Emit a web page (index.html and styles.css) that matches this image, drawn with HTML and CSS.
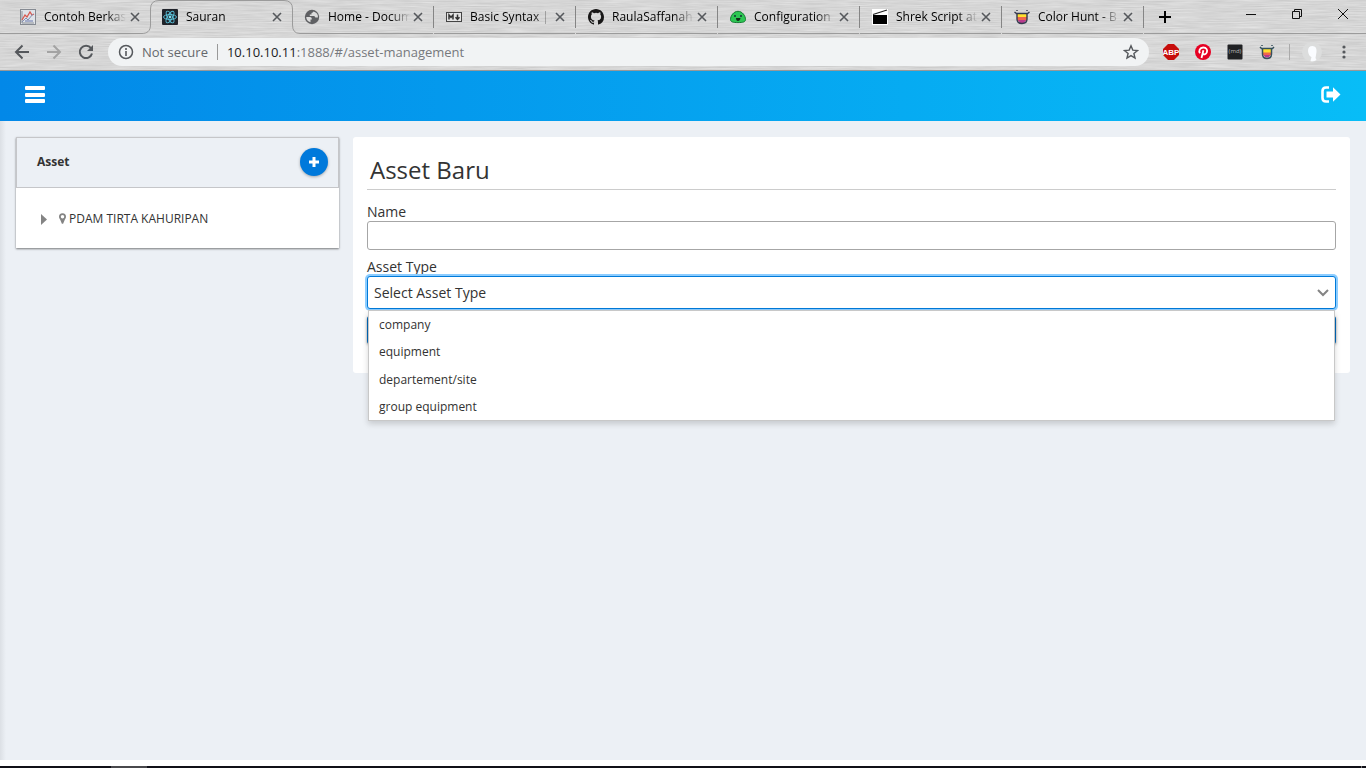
FILE: index.html
```html
<!DOCTYPE html>
<html lang="id">
<head>
<meta charset="utf-8">
<title>Sauran</title>
<link rel="stylesheet" href="styles.css">
</head>
<body>
<div class="browser">
  <svg class="metal" aria-hidden="true" preserveAspectRatio="none">
    <filter id="brushed" x="0" y="0" width="100%" height="100%" color-interpolation-filters="sRGB">
      <feTurbulence type="fractalNoise" baseFrequency="0.03 0.8" numOctaves="3" seed="4"/>
      <feColorMatrix values="0.13 0 0 0 0.775  0.13 0 0 0 0.775  0.13 0 0 0 0.775  0 0 0 0 1"/>
    </filter>
    <rect width="100%" height="100%" filter="url(#brushed)"/>
  </svg>

  <div class="tabstrip">
    <div class="tab before-active">
      <svg class="favicon" viewBox="0 0 16 16"><rect x=".5" y=".5" width="15" height="15" fill="#dfe3e8" stroke="#858a92"/><path d="M2 2v12h12" fill="none" stroke="#8d9198"/><path d="M2 11l3-5 2 2 3-5 2 3 2-1" fill="none" stroke="#d8584e" stroke-width="1.3"/><path d="M2 13l4-4 2 2 5-6" fill="none" stroke="#7f8fb3"/><path d="M5 12h8" stroke="#8f9ac0" stroke-width="1.500"/></svg>
      <a class="tab-title" href="#">Contoh Berkas</a>
      <button class="close" aria-label="Close tab"><svg viewBox="0 0 10 10"><path d="M1 1l8 8M9 1l-8 8"/></svg></button>
    </div>
    <div class="tab active">
      <svg class="tab-shape" viewBox="0 0 158 34" fill="none" aria-hidden="true"><path d="M0 33.500C5 33.500 8.500 31 8.500 25V9Q8.500 .5 17 .5H142Q150.500 .5 150.500 9V25Q150.500 33.500 158 33.500" stroke="#9b9b9b"/></svg>
      <svg class="favicon" viewBox="0 0 16 16"><rect width="16" height="16" rx="1" fill="#20232a"/><g fill="none" stroke="#5bc4dc" stroke-width=".9"><ellipse cx="8" cy="8" rx="6.500" ry="2.500"/><ellipse cx="8" cy="8" rx="6.500" ry="2.500" transform="rotate(60 8 8)"/><ellipse cx="8" cy="8" rx="6.500" ry="2.500" transform="rotate(120 8 8)"/></g><circle cx="8" cy="8" r="1.400" fill="#7fdcf0"/></svg>
      <a class="tab-title" href="#">Sauran</a>
      <button class="close" aria-label="Close tab"><svg viewBox="0 0 10 10"><path d="M1 1l8 8M9 1l-8 8"/></svg></button>
    </div>
    <div class="tab after-active divided">
      <svg class="favicon" viewBox="0 0 16 16"><circle cx="8" cy="8" r="7.200" fill="#5f6063"/><path d="M2.200 8H6q1.800 0 1.800 1.800v.7H6.500v2.700Q2.500 12.500 2.200 8zM9.500 2.600Q9 4 7.500 4v1.500H5.800V7h4q1.500 0 1.500 1.600h2.600Q14.500 4 9.500 2.600z" fill="#dcdcdc"/></svg>
      <a class="tab-title" href="#">Home - Docum</a>
      <button class="close" aria-label="Close tab"><svg viewBox="0 0 10 10"><path d="M1 1l8 8M9 1l-8 8"/></svg></button>
    </div>
    <div class="tab divided">
      <svg class="favicon" viewBox="0 0 16 16"><rect x=".5" y="3.500" width="15" height="9" fill="#e4e4e4" stroke="#444"/><path d="M3 10.500V6l2 2.300L7 6v4.500M11.500 5.500v4.500M9.500 8.300l2 2.200 2-2.200" fill="none" stroke="#333" stroke-width="1.500"/></svg>
      <a class="tab-title" href="#">Basic Syntax | M</a>
      <button class="close" aria-label="Close tab"><svg viewBox="0 0 10 10"><path d="M1 1l8 8M9 1l-8 8"/></svg></button>
    </div>
    <div class="tab divided">
      <svg class="favicon" viewBox="0 0 16 16"><path fill="#181717" d="M8 0C3.580 0 0 3.580 0 8c0 3.540 2.290 6.530 5.470 7.590.4.070.55-.17.55-.38 0-.19-.01-.82-.01-1.490-2.010.37-2.530-.49-2.690-.94-.09-.23-.48-.94-.82-1.130-.28-.15-.68-.52-.01-.53.63-.01 1.080.58 1.230.82.72 1.210 1.870.87 2.330.66.07-.52.28-.87.51-1.070-1.780-.2-3.640-.89-3.640-3.950 0-.87.31-1.590.82-2.150-.08-.2-.36-1.020.08-2.120 0 0 .67-.21 2.200.82a7.600 7.600 0 0 1 4 0c1.530-1.040 2.200-.82 2.200-.82.44 1.100.16 1.920.08 2.120.51.56.82 1.270.82 2.150 0 3.070-1.870 3.750-3.650 3.950.29.25.54.73.54 1.480 0 1.070-.01 1.930-.01 2.200 0 .21.15.46.55.38A8 8 0 0 0 16 8c0-4.420-3.580-8-8-8z"/></svg>
      <a class="tab-title" href="#">RaulaSaffanah</a>
      <button class="close" aria-label="Close tab"><svg viewBox="0 0 10 10"><path d="M1 1l8 8M9 1l-8 8"/></svg></button>
    </div>
    <div class="tab divided">
      <svg class="favicon" viewBox="0 0 16 16"><path d="M8 2.300C12.500 2.300 15.500 7 15.500 10.500 15.500 13 13 13.600 8 13.600S.5 13 .5 10.500C.5 7 3.500 2.300 8 2.300z" fill="#2dc653" stroke="#147a32"/><circle cx="5" cy="7" r=".9" fill="#123"/><circle cx="11" cy="7" r=".9" fill="#123"/><path d="M6 9h4.500Q10 12 8 12T6 9z" fill="#142a1a"/></svg>
      <a class="tab-title" href="#">Configuration</a>
      <button class="close" aria-label="Close tab"><svg viewBox="0 0 10 10"><path d="M1 1l8 8M9 1l-8 8"/></svg></button>
    </div>
    <div class="tab divided">
      <svg class="favicon" viewBox="0 0 16 16"><rect width="16" height="16" fill="#fff"/><path d="M1 6h14v9H1z"/><path d="M1 5.500L15 1" stroke="#222" stroke-width="1.300"/></svg>
      <a class="tab-title" href="#">Shrek Script at</a>
      <button class="close" aria-label="Close tab"><svg viewBox="0 0 10 10"><path d="M1 1l8 8M9 1l-8 8"/></svg></button>
    </div>
    <div class="tab divided">
      <svg class="favicon" viewBox="0 0 16 16"><path d="M3 4h10v5H3z" fill="#ffe02e"/><path d="M3 8h10v2l-1 2H4l-1-2z" fill="#f0674c"/><path d="M4 11h8l-2 3H6z" fill="#b83b8e"/><path d="M.5 3l2 1.500h11l2-1.500M3 4v6q0 4.500 5 4.500T13 10V4M3 1v1M13 1v1" fill="none" stroke="#34384d" stroke-width="1.400"/></svg>
      <a class="tab-title" href="#">Color Hunt - B</a>
      <button class="close" aria-label="Close tab"><svg viewBox="0 0 10 10"><path d="M1 1l8 8M9 1l-8 8"/></svg></button>
    </div>
    <div class="strip-end">
      <button class="new-tab" aria-label="New tab"><svg width="12" height="12" viewBox="0 0 12 12"><path d="M6 0v12M0 6h12" stroke="#000" stroke-width="2"/></svg></button>
      <div class="window-buttons">
        <button aria-label="Minimize"><svg width="10" height="10" viewBox="0 0 10 10"><path d="M0 5.500h10"/></svg></button>
        <button aria-label="Restore"><svg width="10" height="10" viewBox="0 0 10 10"><path d="M.5 2.500h7v7h-7zM2.500 2.500v-2h7v7h-2"/></svg></button>
        <button aria-label="Close"><svg width="10" height="10" viewBox="0 0 10 10"><path d="M0 0l10 10M10 0L0 10"/></svg></button>
      </div>
    </div>
  </div>

  <div class="toolbar">
    <div class="nav-buttons">
      <button aria-label="Back"><svg width="16" height="16" viewBox="0 0 16 16"><path d="M15 8H2M8.500 1.500L2 8l6.500 6.500"/></svg></button>
      <button class="disabled" aria-label="Forward" disabled><svg width="16" height="16" viewBox="0 0 16 16"><path d="M1 8h13M7.500 1.500L14 8l-6.500 6.500"/></svg></button>
      <button aria-label="Reload"><svg width="16" height="16" viewBox="0 0 16 16"><path d="M13 4.200A6.200 6.200 0 1 0 14 9.500"/><path d="M15 1v6H9z" fill="#55585c" stroke="none"/></svg></button>
    </div>
    <div class="address">
      <svg class="info" width="16" height="16" viewBox="0 0 16 16"><circle cx="8" cy="8" r="6.500" fill="none" stroke="#55585c" stroke-width="1.500"/><path d="M8 7v5M8 4v2" stroke="#55585c" stroke-width="1.600"/></svg>
      <span class="secure">Not secure</span>
      <span class="url"><span class="host">10.10.10.11</span>:1888/#/asset-management</span>
      <button class="star" aria-label="Bookmark"><svg width="16" height="16" viewBox="0 0 16 16"><path d="M8 1.800l1.800 4.300 4.700.4-3.600 3 1.100 4.600L8 11.600l-4 2.500 1.100-4.600-3.600-3 4.700-.4z" fill="none" stroke="#55585c" stroke-width="1.400"/></svg></button>
    </div>
    <div class="extensions">
      <button aria-label="Adblock Plus"><svg width="16" height="16" viewBox="0 0 16 16"><path d="M5 0h6l5 5v6l-5 5H5l-5-5V5z" fill="#c70d0b"/><text x="8" y="11" class="abp">ABP</text></svg></button>
      <button aria-label="Pinterest"><svg width="16" height="16" viewBox="0 0 16 16"><circle cx="8" cy="8" r="8" fill="#e60023"/><path d="M5 9.200C3.500 7 4.500 3.500 8.200 3.500c3.500 0 4.500 2.700 3.600 5-.8 2.100-3.300 2.500-4 1M8.400 6.200L6.500 14" fill="none" stroke="#fff" stroke-width="1.800"/></svg></button>
      <button aria-label="Markdown viewer"><svg width="16" height="16" viewBox="0 0 16 16"><rect x=".5" y=".5" width="15" height="15" rx="1" fill="#202124"/><text x="8" y="9" class="md">(md)</text></svg></button>
      <button aria-label="Color Hunt"><svg width="16" height="16" viewBox="0 0 16 16"><path d="M4 4h8v5H4z" fill="#ffe02e"/><path d="M4 8.500h8v2l-1 1.500H5l-1-1.500z" fill="#f0674c"/><path d="M5 11h6l-1 2.500H6z" fill="#b83b8e"/><path d="M1 3l1.500 1.500h11L15 3M3.500 4v6q0 4.500 4.500 4.500t4.500-4.500V4M3 1v1M13 1v1" fill="none" stroke="#34505c" stroke-width="1.500"/></svg></button>
    </div>
    <span class="toolbar-divider"></span>
    <button class="profile" aria-label="Profile"><svg width="20" height="20" viewBox="0 0 20 20"><circle cx="10" cy="10" r="10" fill="#dcdddd"/><path d="M6 9q0-5 4.500-5t4 6l-1 6 1 2q-3 2-6 1l1-4q-3-1-3.500-6z" fill="#fafcff"/></svg></button>
    <button class="menu" aria-label="Menu"><svg width="4" height="14" viewBox="0 0 4 14" fill="#55585c"><circle cx="2" cy="2" r="1.600"/><circle cx="2" cy="7" r="1.600"/><circle cx="2" cy="12" r="1.600"/></svg></button>
  </div>
</div>

<div class="app">
  <header class="topbar">
    <button aria-label="Toggle menu"><svg width="20" height="18" viewBox="0 0 20 18" fill="#fff"><rect y="0" width="20" height="4" rx="1"/><rect y="7" width="20" height="4" rx="1"/><rect y="13" width="20" height="4" rx="1"/></svg></button>
    <button aria-label="Log out"><svg width="20" height="18" viewBox="0 0 20 18"><path d="M8 1.500H5Q1.500 1.500 1.500 5v7Q1.500 15.500 5 15.500h3" fill="none" stroke="#fff" stroke-width="2.600"/><path d="M5.500 5.500H12V1.200L19.500 8.500 12 15.800V11.500H5.500z" fill="#fff"/></svg></button>
  </header>

  <main class="content">
    <section class="tree">
      <div class="tree-header">
        <h2>Asset</h2>
        <button class="add" aria-label="Add asset"><svg width="10" height="10" viewBox="0 0 10 10"><path d="M5 0v10M0 5h10" stroke="#fff" stroke-width="3"/></svg></button>
      </div>
      <div class="tree-body">
        <button class="expand" aria-label="Expand"><svg width="6" height="11" viewBox="0 0 6 11"><path d="M0 0l6 5.500L0 11z" fill="#848484"/></svg></button>
        <svg class="pin" width="7" height="11" viewBox="0 0 8 12"><path fill="#848484" fill-rule="evenodd" d="M4 0a4 4 0 0 1 4 4c0 1.500-1 2.600-1.500 3.800L4.700 12H3.300L1.500 7.800C1 6.600 0 5.500 0 4a4 4 0 0 1 4-4zm0 2a2 2 0 1 0 0 4 2 2 0 0 0 0-4z"/></svg>
        <a href="#">PDAM TIRTA KAHURIPAN</a>
      </div>
    </section>

    <form class="panel">
      <h1>Asset Baru</h1>
      <label for="name">Name</label>
      <input class="name" id="name" type="text">
      <label for="type">Asset Type</label>
      <div class="dropdown">
        <select id="type"><option>Select Asset Type</option><option>company</option><option>equipment</option><option>departement/site</option><option>group equipment</option></select>
        <svg class="chevron" width="12" height="8" viewBox="0 0 12 8"><path d="M1 1l5 5 5-5" fill="none" stroke="#848484" stroke-width="2"/></svg>
        <ul class="options">
          <li>company</li>
          <li>equipment</li>
          <li>departement/site</li>
          <li>group equipment</li>
        </ul>
      </div>
      <button class="submit" type="button" aria-label="Submit"></button>
    </form>
  </main>
</div>
<footer class="taskbar"><span class="task"></span><span class="desktop-edge"></span></footer>
</body>
</html>
```
FILE: styles.css
```css
* { box-sizing: border-box; }

body {
  margin: 0;
  min-height: 100vh;
  display: flex;
  flex-direction: column;
  background: #fff;
  color: #333;
  font: 14px/20px "Open Sans", sans-serif;
}

button {
  display: flex;
  align-items: center;
  justify-content: center;
  padding: 0;
  border: 0;
  background: none;
}

a { color: inherit; text-decoration: none; }

/* Browser window */
.browser {
  position: relative;
  border-bottom: 1px solid #989898;
  background: #d6d6d6;
}
.metal {
  position: absolute;
  inset: 0;
  width: 100%;
  height: 100%;
}
.tabstrip {
  position: relative;
  display: flex;
  height: 34px;
  padding-left: 8px;
  background: linear-gradient(#9b9b9b, #9b9b9b) 0 100% / 8px 1px no-repeat;
}
.tab {
  position: relative;
  display: flex;
  align-items: center;
  flex: 0 1 142px;
  min-width: 0;
  padding: 0 10px 0 12px;
  background: linear-gradient(#9b9b9b, #9b9b9b) 0 100% / 100% 1px no-repeat;
}
.before-active { background-size: calc(100% - 8px) 1px; }
.active { background: none; }
.after-active {
  background-position: 100% 100%;
  background-size: calc(100% - 8px) 1px;
}
.divided { border-right: 1px solid transparent; border-image: linear-gradient(transparent 7px, #858585 7px, #858585 27px, transparent 27px) 1; }
.tab-shape {
  position: absolute;
  left: -8px;
  top: 0;
  width: 158px;
  height: 34px;
}
.favicon {
  position: relative;
  flex: none;
  width: 16px;
  height: 16px;
}
.tab-title {
  position: relative;
  flex: 1;
  margin: 0 0 0 8px;
  overflow: hidden;
  white-space: nowrap;
  color: #000;
  font-size: 12px;
  -webkit-mask-image: linear-gradient(90deg, #000 62px, transparent 82px);
  mask-image: linear-gradient(90deg, #000 62px, transparent 82px);
}
.close { position: relative; }
.close svg {
  width: 10px;
  height: 10px;
  stroke: #55585c;
  stroke-width: 1.6;
}
.strip-end {
  display: flex;
  flex: 1;
  justify-content: space-between;
  padding-left: 11px;
  background: linear-gradient(#9b9b9b, #9b9b9b) 0 100% / 100% 1px no-repeat;
}
.new-tab { width: 20px; }
.window-buttons { display: flex; height: 28px; }
.window-buttons button { width: 46px; }
.window-buttons svg { fill: none; stroke: #111; overflow: visible; }

.toolbar {
  position: relative;
  display: flex;
  align-items: center;
  height: 36px;
}
.nav-buttons { display: flex; gap: 16px; padding: 0 14px; }
.nav-buttons svg { fill: none; stroke: #55585c; stroke-width: 2; }
.nav-buttons .disabled svg { stroke: #a3a3a3; }
.address {
  display: flex;
  align-items: center;
  flex: 1;
  height: 28px;
  padding: 0 10px;
  border-radius: 14px;
  background: #f1f3f4;
  color: #77797d;
  font-size: 13px;
}
.secure {
  margin: 0 9px 0 8px;
  padding-right: 9px;
  border-right: 1px solid #999;
  color: #65686c;
  line-height: 16px;
}
.host { color: #202124; }
.star { margin-left: auto; }
.extensions { display: flex; gap: 16px; padding-left: 14px; }
.abp { fill: #fff; font: bold 8px "Liberation Sans", sans-serif; text-anchor: middle; }
.md { fill: #bbb; font: 6px "Open Sans", sans-serif; text-anchor: middle; }
.toolbar-divider { width: 1px; height: 16px; margin: 0 12px 0 14px; background: #aaa; }
.menu { margin: 0 20px; }

/* Application */
.app {
  flex: 1;
  margin-bottom: 6px;
  background: linear-gradient(90deg, #dce0e5, #ecf0f5 6px);
}
.topbar {
  display: flex;
  align-items: center;
  justify-content: space-between;
  height: 50px;
  padding: 0 25px 2px;
  background: linear-gradient(90deg, #0288e8, #08bdf7);
}
.content {
  display: grid;
  grid-template-columns: 323fr 997fr;
  gap: 14px;
  align-items: start;
  padding: 16px 16px 0;
}
.tree {
  background: #fff;
  box-shadow: 0 1px 2px rgba(0, 0, 0, .5);
}
.tree-header {
  display: flex;
  align-items: center;
  justify-content: space-between;
  height: 51px;
  padding: 0 10px 2px 20px;
  border: 1px solid #c5c6c9;
  background: #ecf0f5;
}
.tree-header h2 { margin: 0; font-size: 12px; font-weight: 700; }
.add {
  width: 28px;
  height: 28px;
  border-radius: 50%;
  background: #0079db;
  box-shadow: 0 1px 3px rgba(0, 0, 0, .3);
}
.tree-body {
  display: flex;
  align-items: center;
  height: 60px;
  padding: 2px 0 0 25px;
  font-size: 12px;
}
.pin { margin: 0 3px 2px 12px; }

.panel {
  display: flex;
  flex-direction: column;
  padding: 16px 14px 28px;
  border-radius: 3px;
  background: #fff;
}
.panel h1 {
  margin: 0 0 12px;
  padding: 0 3px 2px;
  border-bottom: 1px solid #ccc;
  font-size: 24px;
  font-weight: 400;
  line-height: 34px;
}
.panel label { line-height: 19px; }
.name {
  height: 29px;
  margin-bottom: 7px;
  border: 1px solid #a6a6a6;
  border-radius: 3px;
  background: #fff;
  font: inherit;
}
.dropdown { position: relative; }
.dropdown select {
  display: block;
  width: 100%;
  height: 33px;
  padding: 0 6px;
  border: 1px solid #007ad9;
  border-radius: 3px;
  box-shadow: 0 0 0 2px #8dcdff;
  background: #fff;
  color: #333;
  font: inherit;
  appearance: none;
}
.chevron { position: absolute; right: 7px; top: 13px; }
.options {
  position: absolute;
  top: 100%;
  left: 1px;
  right: 1px;
  z-index: 1;
  margin: 1px 0 0;
  padding: 0;
  border: 1px solid #c8c8c8;
  background: #fff;
  box-shadow: 0 3px 6px rgba(0, 0, 0, .16);
  list-style: none;
  font-size: 12px;
}
.options li { padding: 4px 10px 3px; }
.options li:nth-child(3) { padding-top: 5px; }
.submit {
  height: 28px;
  margin-top: 7px;
  margin-bottom: 1px;
  border-radius: 3px;
  background: #0068b8;
  box-shadow: 0 1px 3px rgba(0, 0, 0, .4);
}

.taskbar {
  display: flex;
  justify-content: space-between;
  height: 2px;
  padding: 0 4px 0 111px;
  background: #101018;
}
.task { width: 36px; background: #48484c; }
.desktop-edge { width: 1px; background: #777; }
```
